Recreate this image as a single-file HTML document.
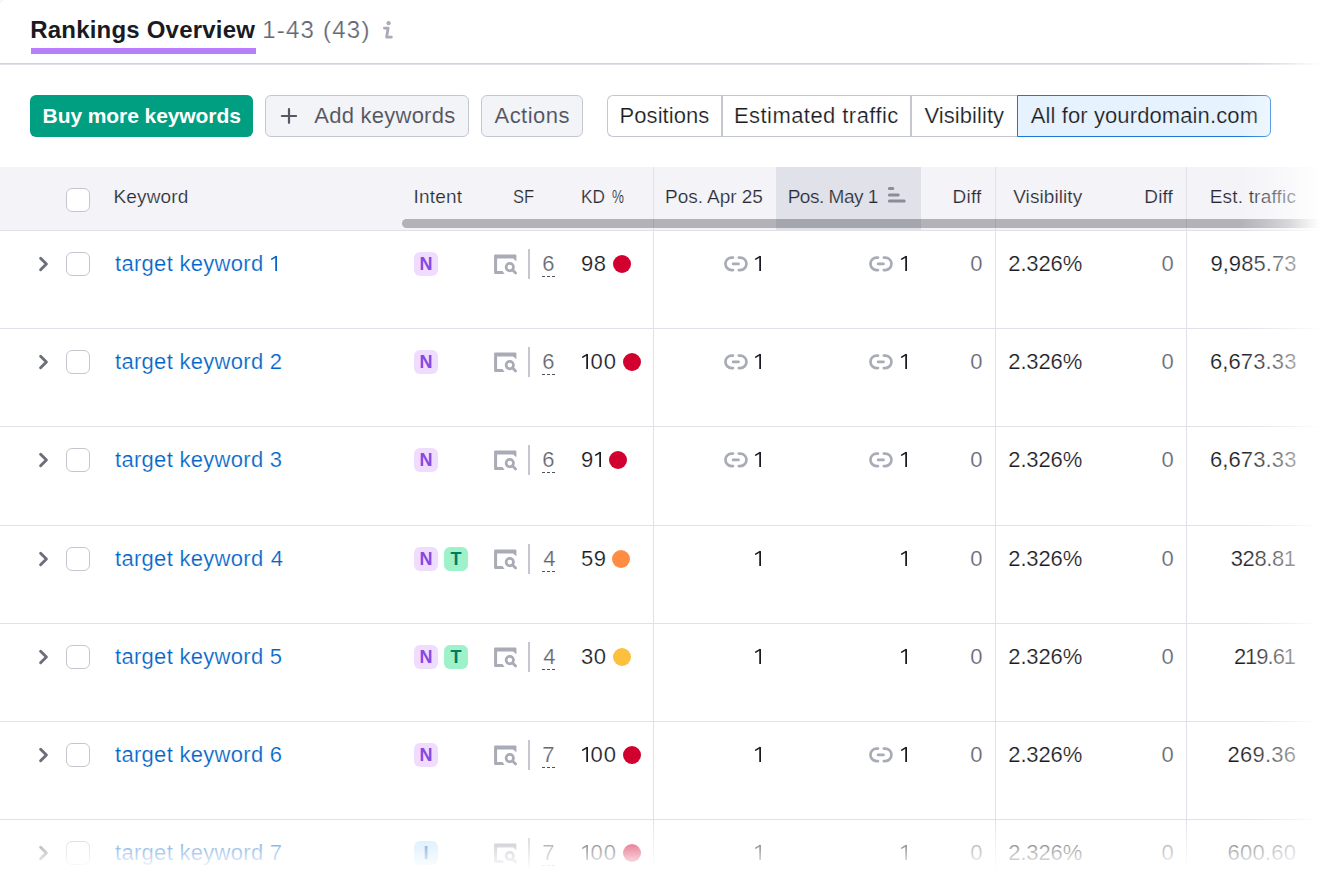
<!DOCTYPE html>
<html><head><meta charset="utf-8"><title>Rankings Overview</title>
<style>
html,body{margin:0;padding:0;background:#fff;width:1323px;height:879px;overflow:hidden;}
body{position:relative;font-family:"Liberation Sans", sans-serif;}
.a{position:absolute;}
.t{position:absolute;white-space:nowrap;}
svg.a{overflow:visible;}
</style></head><body>
<div class="a" style="left:-12px;top:-10px;width:15px;height:15px;box-sizing:border-box;border:1.5px solid #e6e7ec;border-radius:50%"></div>
<svg class="a" style="left:380px;top:18px" width="16" height="24" viewBox="0 0 16 24"><circle cx="8.6" cy="5.2" r="2.1" fill="#a9abb6"/><path d="M4.4 10.1 H8.1 L6.6 19.2 H11.4" fill="none" stroke="#a9abb6" stroke-width="2.8" stroke-linecap="round" stroke-linejoin="round"/></svg>
<div class="a" style="left:31px;top:48px;width:225px;height:6px;background:#b77ffb"></div>
<div class="a" style="left:0;top:63px;width:1323px;height:1px;background:#d0d3dc"></div>
<div class="a" style="left:0;top:64px;width:1323px;height:1px;background:#e0e1e8"></div>
<div class="a" style="left:30px;top:95px;width:223px;height:42px;border-radius:6px;background:#009f81"></div>
<div class="a" style="left:265px;top:95px;width:204px;height:42px;box-sizing:border-box;border:1.5px solid #c4c7cf;border-radius:6px;background:#f3f4f8"></div>
<svg class="a" style="left:279px;top:106px" width="20" height="20" viewBox="0 0 20 20"><path d="M10 3.2 V16.8 M2.9 10 H17.1" stroke="#555863" stroke-width="2.2" stroke-linecap="round"/></svg>
<div class="a" style="left:481px;top:95px;width:102px;height:42px;box-sizing:border-box;border:1.5px solid #c4c7cf;border-radius:6px;background:#f3f4f8"></div>
<div class="a" style="left:607px;top:95px;width:420px;height:42px;box-sizing:border-box;border:1.5px solid #c4c7cf;border-right:none;border-radius:6px 0 0 6px;background:#fff"></div>
<div class="a" style="left:721px;top:95px;width:1.5px;height:42px;background:#c4c7cf"></div>
<div class="a" style="left:910px;top:95px;width:1.5px;height:42px;background:#c4c7cf"></div>
<div class="a" style="left:1017px;top:95px;width:254px;height:42px;box-sizing:border-box;border:1.5px solid #1d78d6;border-radius:0 6px 6px 0;background:#e6f3fe"></div>
<div class="a" style="left:0;top:167px;width:1323px;height:63px;background:#f4f4f8"></div>
<div class="a" style="left:776px;top:167px;width:145px;height:63px;background:#e0e1e9"></div>
<div class="a" style="left:0;top:230px;width:1323px;height:1px;background:#e0e1e9"></div>
<div class="a" style="left:66px;top:188px;width:24px;height:24px;box-sizing:border-box;border:1.5px solid #c4c7cf;border-radius:6px;background:#fff"></div>
<svg class="a" style="left:886px;top:185px" width="22" height="20" viewBox="0 0 22 20"><path d="M3.4 3.6 H6.8 M3.4 10 H12.2 M3.4 16 H18.2" stroke="#8a8c97" stroke-width="3" stroke-linecap="round"/></svg>
<div class="a" style="left:653px;top:167px;width:1px;height:712px;background:#e0e1e9"></div>
<div class="a" style="left:995px;top:167px;width:1px;height:712px;background:#e0e1e9"></div>
<div class="a" style="left:1186px;top:167px;width:1px;height:712px;background:#e0e1e9"></div>
<div class="a" style="left:402px;top:219px;width:940px;height:9px;border-radius:4.5px;background:rgba(25,27,35,0.30)"></div>
<div class="a" style="left:0;top:328px;width:1323px;height:1px;background:#e0e1e9"></div>
<div class="a" style="left:0;top:426px;width:1323px;height:1px;background:#e0e1e9"></div>
<div class="a" style="left:0;top:525px;width:1323px;height:1px;background:#e0e1e9"></div>
<div class="a" style="left:0;top:623px;width:1323px;height:1px;background:#e0e1e9"></div>
<div class="a" style="left:0;top:721px;width:1323px;height:1px;background:#e0e1e9"></div>
<div class="a" style="left:0;top:819px;width:1323px;height:1px;background:#e0e1e9"></div>
<svg class="a" style="left:36px;top:254px" width="16" height="20" viewBox="0 0 16 20"><path d="M4.6 4.2 L10.4 10 L4.6 15.8" fill="none" stroke="#6c6e79" stroke-width="2.9" stroke-linecap="round" stroke-linejoin="round"/></svg>
<div class="a" style="left:66px;top:252px;width:24px;height:24px;box-sizing:border-box;border:1.5px solid #c4c7cf;border-radius:6px;background:#fff"></div>
<div class="a" style="left:414px;top:252px;width:24px;height:24px;border-radius:6px;background:#f0dcfe"></div>
<div class="t" style="left:414px;width:24px;text-align:center;top:254.50px;font-size:18px;line-height:18px;font-weight:700;color:#8649e1">N</div>
<svg class="a" style="left:494px;top:254px" width="24" height="22" viewBox="0 0 24 22"><path d="M0.1 1.6 Q0.1 0.4 1.3 0.4 H21.2 Q22.4 0.4 22.4 1.6 V7.3 L19.1 4.6 H3.1 V17 H8.5 L10.6 19.9 H1.3 Q0.1 19.9 0.1 18.7 Z" fill="#a9abb6"/><circle cx="15.8" cy="13.1" r="3.7" fill="none" stroke="#a9abb6" stroke-width="2.7"/><path d="M18.6 15.9 L21.6 18.9" stroke="#a9abb6" stroke-width="2.8" stroke-linecap="round"/></svg>
<div class="a" style="left:528px;top:249px;width:2px;height:30px;background:#c4c7cf"></div>
<div class="a" style="left:541.8px;top:276px;width:13.3px;height:1px;background:repeating-linear-gradient(to right,#50535e 0 3px,transparent 3px 5px)"></div>
<div class="a" style="left:613.0px;top:255px;width:18px;height:18px;border-radius:50%;background:#d1002f"></div>
<svg class="a" style="left:269.30px;top:254.85px" width="9" height="17" viewBox="0 0 9 17"><rect x="6.25" y="1.15" width="1.75" height="14.85" fill="#0064c8"/><path d="M2.7 4.1 L6.9 1.6" stroke="#0064c8" stroke-width="1.6" stroke-linecap="round"/></svg>
<svg class="a" style="left:753.07px;top:254.85px" width="9" height="17" viewBox="0 0 9 17"><rect x="6.25" y="1.15" width="1.75" height="14.85" fill="#191b23"/><path d="M2.7 4.1 L6.9 1.6" stroke="#191b23" stroke-width="1.6" stroke-linecap="round"/></svg>
<svg class="a" style="left:898.60px;top:254.85px" width="9" height="17" viewBox="0 0 9 17"><rect x="6.25" y="1.15" width="1.75" height="14.85" fill="#191b23"/><path d="M2.7 4.1 L6.9 1.6" stroke="#191b23" stroke-width="1.6" stroke-linecap="round"/></svg>
<svg class="a" style="left:723px;top:256px" width="26" height="17" viewBox="0 0 26 17"><path d="M9.95 1.55 H8.7 A6.25 6.25 0 0 0 8.7 14.05 H9.95 M15.85 1.55 H17.2 A6.25 6.25 0 0 1 17.2 14.05 H15.85 M10.1 7.9 H15.5" fill="none" stroke="#a9abb6" stroke-width="2.7" stroke-linecap="round"/></svg>
<svg class="a" style="left:868px;top:256px" width="26" height="17" viewBox="0 0 26 17"><path d="M9.95 1.55 H8.7 A6.25 6.25 0 0 0 8.7 14.05 H9.95 M15.85 1.55 H17.2 A6.25 6.25 0 0 1 17.2 14.05 H15.85 M10.1 7.9 H15.5" fill="none" stroke="#a9abb6" stroke-width="2.7" stroke-linecap="round"/></svg>
<svg class="a" style="left:36px;top:352px" width="16" height="20" viewBox="0 0 16 20"><path d="M4.6 4.2 L10.4 10 L4.6 15.8" fill="none" stroke="#6c6e79" stroke-width="2.9" stroke-linecap="round" stroke-linejoin="round"/></svg>
<div class="a" style="left:66px;top:350px;width:24px;height:24px;box-sizing:border-box;border:1.5px solid #c4c7cf;border-radius:6px;background:#fff"></div>
<div class="a" style="left:414px;top:350px;width:24px;height:24px;border-radius:6px;background:#f0dcfe"></div>
<div class="t" style="left:414px;width:24px;text-align:center;top:352.50px;font-size:18px;line-height:18px;font-weight:700;color:#8649e1">N</div>
<svg class="a" style="left:494px;top:352px" width="24" height="22" viewBox="0 0 24 22"><path d="M0.1 1.6 Q0.1 0.4 1.3 0.4 H21.2 Q22.4 0.4 22.4 1.6 V7.3 L19.1 4.6 H3.1 V17 H8.5 L10.6 19.9 H1.3 Q0.1 19.9 0.1 18.7 Z" fill="#a9abb6"/><circle cx="15.8" cy="13.1" r="3.7" fill="none" stroke="#a9abb6" stroke-width="2.7"/><path d="M18.6 15.9 L21.6 18.9" stroke="#a9abb6" stroke-width="2.8" stroke-linecap="round"/></svg>
<div class="a" style="left:528px;top:347px;width:2px;height:30px;background:#c4c7cf"></div>
<div class="a" style="left:541.8px;top:374px;width:13.3px;height:1px;background:repeating-linear-gradient(to right,#50535e 0 3px,transparent 3px 5px)"></div>
<div class="a" style="left:622.9px;top:353px;width:18px;height:18px;border-radius:50%;background:#d1002f"></div>
<svg class="a" style="left:579.80px;top:352.85px" width="9" height="17" viewBox="0 0 9 17"><rect x="6.25" y="1.15" width="1.75" height="14.85" fill="#191b23"/><path d="M2.7 4.1 L6.9 1.6" stroke="#191b23" stroke-width="1.6" stroke-linecap="round"/></svg>
<svg class="a" style="left:753.07px;top:352.85px" width="9" height="17" viewBox="0 0 9 17"><rect x="6.25" y="1.15" width="1.75" height="14.85" fill="#191b23"/><path d="M2.7 4.1 L6.9 1.6" stroke="#191b23" stroke-width="1.6" stroke-linecap="round"/></svg>
<svg class="a" style="left:898.60px;top:352.85px" width="9" height="17" viewBox="0 0 9 17"><rect x="6.25" y="1.15" width="1.75" height="14.85" fill="#191b23"/><path d="M2.7 4.1 L6.9 1.6" stroke="#191b23" stroke-width="1.6" stroke-linecap="round"/></svg>
<svg class="a" style="left:723px;top:354px" width="26" height="17" viewBox="0 0 26 17"><path d="M9.95 1.55 H8.7 A6.25 6.25 0 0 0 8.7 14.05 H9.95 M15.85 1.55 H17.2 A6.25 6.25 0 0 1 17.2 14.05 H15.85 M10.1 7.9 H15.5" fill="none" stroke="#a9abb6" stroke-width="2.7" stroke-linecap="round"/></svg>
<svg class="a" style="left:868px;top:354px" width="26" height="17" viewBox="0 0 26 17"><path d="M9.95 1.55 H8.7 A6.25 6.25 0 0 0 8.7 14.05 H9.95 M15.85 1.55 H17.2 A6.25 6.25 0 0 1 17.2 14.05 H15.85 M10.1 7.9 H15.5" fill="none" stroke="#a9abb6" stroke-width="2.7" stroke-linecap="round"/></svg>
<svg class="a" style="left:36px;top:450px" width="16" height="20" viewBox="0 0 16 20"><path d="M4.6 4.2 L10.4 10 L4.6 15.8" fill="none" stroke="#6c6e79" stroke-width="2.9" stroke-linecap="round" stroke-linejoin="round"/></svg>
<div class="a" style="left:66px;top:448px;width:24px;height:24px;box-sizing:border-box;border:1.5px solid #c4c7cf;border-radius:6px;background:#fff"></div>
<div class="a" style="left:414px;top:448px;width:24px;height:24px;border-radius:6px;background:#f0dcfe"></div>
<div class="t" style="left:414px;width:24px;text-align:center;top:450.50px;font-size:18px;line-height:18px;font-weight:700;color:#8649e1">N</div>
<svg class="a" style="left:494px;top:450px" width="24" height="22" viewBox="0 0 24 22"><path d="M0.1 1.6 Q0.1 0.4 1.3 0.4 H21.2 Q22.4 0.4 22.4 1.6 V7.3 L19.1 4.6 H3.1 V17 H8.5 L10.6 19.9 H1.3 Q0.1 19.9 0.1 18.7 Z" fill="#a9abb6"/><circle cx="15.8" cy="13.1" r="3.7" fill="none" stroke="#a9abb6" stroke-width="2.7"/><path d="M18.6 15.9 L21.6 18.9" stroke="#a9abb6" stroke-width="2.8" stroke-linecap="round"/></svg>
<div class="a" style="left:528px;top:445px;width:2px;height:30px;background:#c4c7cf"></div>
<div class="a" style="left:541.8px;top:472px;width:13.3px;height:1px;background:repeating-linear-gradient(to right,#50535e 0 3px,transparent 3px 5px)"></div>
<div class="a" style="left:608.9px;top:451px;width:18px;height:18px;border-radius:50%;background:#d1002f"></div>
<svg class="a" style="left:592.90px;top:450.85px" width="9" height="17" viewBox="0 0 9 17"><rect x="6.25" y="1.15" width="1.75" height="14.85" fill="#191b23"/><path d="M2.7 4.1 L6.9 1.6" stroke="#191b23" stroke-width="1.6" stroke-linecap="round"/></svg>
<svg class="a" style="left:753.07px;top:450.85px" width="9" height="17" viewBox="0 0 9 17"><rect x="6.25" y="1.15" width="1.75" height="14.85" fill="#191b23"/><path d="M2.7 4.1 L6.9 1.6" stroke="#191b23" stroke-width="1.6" stroke-linecap="round"/></svg>
<svg class="a" style="left:898.60px;top:450.85px" width="9" height="17" viewBox="0 0 9 17"><rect x="6.25" y="1.15" width="1.75" height="14.85" fill="#191b23"/><path d="M2.7 4.1 L6.9 1.6" stroke="#191b23" stroke-width="1.6" stroke-linecap="round"/></svg>
<svg class="a" style="left:723px;top:452px" width="26" height="17" viewBox="0 0 26 17"><path d="M9.95 1.55 H8.7 A6.25 6.25 0 0 0 8.7 14.05 H9.95 M15.85 1.55 H17.2 A6.25 6.25 0 0 1 17.2 14.05 H15.85 M10.1 7.9 H15.5" fill="none" stroke="#a9abb6" stroke-width="2.7" stroke-linecap="round"/></svg>
<svg class="a" style="left:868px;top:452px" width="26" height="17" viewBox="0 0 26 17"><path d="M9.95 1.55 H8.7 A6.25 6.25 0 0 0 8.7 14.05 H9.95 M15.85 1.55 H17.2 A6.25 6.25 0 0 1 17.2 14.05 H15.85 M10.1 7.9 H15.5" fill="none" stroke="#a9abb6" stroke-width="2.7" stroke-linecap="round"/></svg>
<svg class="a" style="left:36px;top:549px" width="16" height="20" viewBox="0 0 16 20"><path d="M4.6 4.2 L10.4 10 L4.6 15.8" fill="none" stroke="#6c6e79" stroke-width="2.9" stroke-linecap="round" stroke-linejoin="round"/></svg>
<div class="a" style="left:66px;top:547px;width:24px;height:24px;box-sizing:border-box;border:1.5px solid #c4c7cf;border-radius:6px;background:#fff"></div>
<div class="a" style="left:414px;top:547px;width:24px;height:24px;border-radius:6px;background:#f0dcfe"></div>
<div class="t" style="left:414px;width:24px;text-align:center;top:549.50px;font-size:18px;line-height:18px;font-weight:700;color:#8649e1">N</div>
<div class="a" style="left:444px;top:547px;width:24px;height:24px;border-radius:6px;background:#9ef2c9"></div>
<div class="t" style="left:444px;width:24px;text-align:center;top:549.50px;font-size:18px;line-height:18px;font-weight:700;color:#007c65">T</div>
<svg class="a" style="left:494px;top:549px" width="24" height="22" viewBox="0 0 24 22"><path d="M0.1 1.6 Q0.1 0.4 1.3 0.4 H21.2 Q22.4 0.4 22.4 1.6 V7.3 L19.1 4.6 H3.1 V17 H8.5 L10.6 19.9 H1.3 Q0.1 19.9 0.1 18.7 Z" fill="#a9abb6"/><circle cx="15.8" cy="13.1" r="3.7" fill="none" stroke="#a9abb6" stroke-width="2.7"/><path d="M18.6 15.9 L21.6 18.9" stroke="#a9abb6" stroke-width="2.8" stroke-linecap="round"/></svg>
<div class="a" style="left:528px;top:544px;width:2px;height:30px;background:#c4c7cf"></div>
<div class="a" style="left:541.8px;top:571px;width:13.3px;height:1px;background:repeating-linear-gradient(to right,#50535e 0 3px,transparent 3px 5px)"></div>
<div class="a" style="left:612.0px;top:550px;width:18px;height:18px;border-radius:50%;background:#ff8c43"></div>
<svg class="a" style="left:753.07px;top:549.85px" width="9" height="17" viewBox="0 0 9 17"><rect x="6.25" y="1.15" width="1.75" height="14.85" fill="#191b23"/><path d="M2.7 4.1 L6.9 1.6" stroke="#191b23" stroke-width="1.6" stroke-linecap="round"/></svg>
<svg class="a" style="left:898.60px;top:549.85px" width="9" height="17" viewBox="0 0 9 17"><rect x="6.25" y="1.15" width="1.75" height="14.85" fill="#191b23"/><path d="M2.7 4.1 L6.9 1.6" stroke="#191b23" stroke-width="1.6" stroke-linecap="round"/></svg>
<svg class="a" style="left:36px;top:647px" width="16" height="20" viewBox="0 0 16 20"><path d="M4.6 4.2 L10.4 10 L4.6 15.8" fill="none" stroke="#6c6e79" stroke-width="2.9" stroke-linecap="round" stroke-linejoin="round"/></svg>
<div class="a" style="left:66px;top:645px;width:24px;height:24px;box-sizing:border-box;border:1.5px solid #c4c7cf;border-radius:6px;background:#fff"></div>
<div class="a" style="left:414px;top:645px;width:24px;height:24px;border-radius:6px;background:#f0dcfe"></div>
<div class="t" style="left:414px;width:24px;text-align:center;top:647.50px;font-size:18px;line-height:18px;font-weight:700;color:#8649e1">N</div>
<div class="a" style="left:444px;top:645px;width:24px;height:24px;border-radius:6px;background:#9ef2c9"></div>
<div class="t" style="left:444px;width:24px;text-align:center;top:647.50px;font-size:18px;line-height:18px;font-weight:700;color:#007c65">T</div>
<svg class="a" style="left:494px;top:647px" width="24" height="22" viewBox="0 0 24 22"><path d="M0.1 1.6 Q0.1 0.4 1.3 0.4 H21.2 Q22.4 0.4 22.4 1.6 V7.3 L19.1 4.6 H3.1 V17 H8.5 L10.6 19.9 H1.3 Q0.1 19.9 0.1 18.7 Z" fill="#a9abb6"/><circle cx="15.8" cy="13.1" r="3.7" fill="none" stroke="#a9abb6" stroke-width="2.7"/><path d="M18.6 15.9 L21.6 18.9" stroke="#a9abb6" stroke-width="2.8" stroke-linecap="round"/></svg>
<div class="a" style="left:528px;top:642px;width:2px;height:30px;background:#c4c7cf"></div>
<div class="a" style="left:541.8px;top:669px;width:13.3px;height:1px;background:repeating-linear-gradient(to right,#50535e 0 3px,transparent 3px 5px)"></div>
<div class="a" style="left:613.1px;top:648px;width:18px;height:18px;border-radius:50%;background:#fdc03c"></div>
<svg class="a" style="left:753.07px;top:647.85px" width="9" height="17" viewBox="0 0 9 17"><rect x="6.25" y="1.15" width="1.75" height="14.85" fill="#191b23"/><path d="M2.7 4.1 L6.9 1.6" stroke="#191b23" stroke-width="1.6" stroke-linecap="round"/></svg>
<svg class="a" style="left:898.60px;top:647.85px" width="9" height="17" viewBox="0 0 9 17"><rect x="6.25" y="1.15" width="1.75" height="14.85" fill="#191b23"/><path d="M2.7 4.1 L6.9 1.6" stroke="#191b23" stroke-width="1.6" stroke-linecap="round"/></svg>
<svg class="a" style="left:36px;top:745px" width="16" height="20" viewBox="0 0 16 20"><path d="M4.6 4.2 L10.4 10 L4.6 15.8" fill="none" stroke="#6c6e79" stroke-width="2.9" stroke-linecap="round" stroke-linejoin="round"/></svg>
<div class="a" style="left:66px;top:743px;width:24px;height:24px;box-sizing:border-box;border:1.5px solid #c4c7cf;border-radius:6px;background:#fff"></div>
<div class="a" style="left:414px;top:743px;width:24px;height:24px;border-radius:6px;background:#f0dcfe"></div>
<div class="t" style="left:414px;width:24px;text-align:center;top:745.50px;font-size:18px;line-height:18px;font-weight:700;color:#8649e1">N</div>
<svg class="a" style="left:494px;top:745px" width="24" height="22" viewBox="0 0 24 22"><path d="M0.1 1.6 Q0.1 0.4 1.3 0.4 H21.2 Q22.4 0.4 22.4 1.6 V7.3 L19.1 4.6 H3.1 V17 H8.5 L10.6 19.9 H1.3 Q0.1 19.9 0.1 18.7 Z" fill="#a9abb6"/><circle cx="15.8" cy="13.1" r="3.7" fill="none" stroke="#a9abb6" stroke-width="2.7"/><path d="M18.6 15.9 L21.6 18.9" stroke="#a9abb6" stroke-width="2.8" stroke-linecap="round"/></svg>
<div class="a" style="left:528px;top:740px;width:2px;height:30px;background:#c4c7cf"></div>
<div class="a" style="left:541.8px;top:767px;width:13.3px;height:1px;background:repeating-linear-gradient(to right,#50535e 0 3px,transparent 3px 5px)"></div>
<div class="a" style="left:622.9px;top:746px;width:18px;height:18px;border-radius:50%;background:#d1002f"></div>
<svg class="a" style="left:579.80px;top:745.85px" width="9" height="17" viewBox="0 0 9 17"><rect x="6.25" y="1.15" width="1.75" height="14.85" fill="#191b23"/><path d="M2.7 4.1 L6.9 1.6" stroke="#191b23" stroke-width="1.6" stroke-linecap="round"/></svg>
<svg class="a" style="left:753.07px;top:745.85px" width="9" height="17" viewBox="0 0 9 17"><rect x="6.25" y="1.15" width="1.75" height="14.85" fill="#191b23"/><path d="M2.7 4.1 L6.9 1.6" stroke="#191b23" stroke-width="1.6" stroke-linecap="round"/></svg>
<svg class="a" style="left:898.60px;top:745.85px" width="9" height="17" viewBox="0 0 9 17"><rect x="6.25" y="1.15" width="1.75" height="14.85" fill="#191b23"/><path d="M2.7 4.1 L6.9 1.6" stroke="#191b23" stroke-width="1.6" stroke-linecap="round"/></svg>
<svg class="a" style="left:868px;top:747px" width="26" height="17" viewBox="0 0 26 17"><path d="M9.95 1.55 H8.7 A6.25 6.25 0 0 0 8.7 14.05 H9.95 M15.85 1.55 H17.2 A6.25 6.25 0 0 1 17.2 14.05 H15.85 M10.1 7.9 H15.5" fill="none" stroke="#a9abb6" stroke-width="2.7" stroke-linecap="round"/></svg>
<svg class="a" style="left:36px;top:843px" width="16" height="20" viewBox="0 0 16 20"><path d="M4.6 4.2 L10.4 10 L4.6 15.8" fill="none" stroke="#6c6e79" stroke-width="2.9" stroke-linecap="round" stroke-linejoin="round"/></svg>
<div class="a" style="left:66px;top:841px;width:24px;height:24px;box-sizing:border-box;border:1.5px solid #c4c7cf;border-radius:6px;background:#fff"></div>
<div class="a" style="left:414px;top:841px;width:24px;height:24px;border-radius:6px;background:#c4e5fe"></div>
<div class="t" style="left:414px;width:24px;text-align:center;top:843.50px;font-size:18px;line-height:18px;font-weight:700;color:#006dca">I</div>
<svg class="a" style="left:494px;top:843px" width="24" height="22" viewBox="0 0 24 22"><path d="M0.1 1.6 Q0.1 0.4 1.3 0.4 H21.2 Q22.4 0.4 22.4 1.6 V7.3 L19.1 4.6 H3.1 V17 H8.5 L10.6 19.9 H1.3 Q0.1 19.9 0.1 18.7 Z" fill="#a9abb6"/><circle cx="15.8" cy="13.1" r="3.7" fill="none" stroke="#a9abb6" stroke-width="2.7"/><path d="M18.6 15.9 L21.6 18.9" stroke="#a9abb6" stroke-width="2.8" stroke-linecap="round"/></svg>
<div class="a" style="left:528px;top:838px;width:2px;height:30px;background:#c4c7cf"></div>
<div class="a" style="left:541.8px;top:865px;width:13.3px;height:1px;background:repeating-linear-gradient(to right,#50535e 0 3px,transparent 3px 5px)"></div>
<div class="a" style="left:622.9px;top:844px;width:18px;height:18px;border-radius:50%;background:#d1002f"></div>
<svg class="a" style="left:579.80px;top:843.85px" width="9" height="17" viewBox="0 0 9 17"><rect x="6.25" y="1.15" width="1.75" height="14.85" fill="#191b23"/><path d="M2.7 4.1 L6.9 1.6" stroke="#191b23" stroke-width="1.6" stroke-linecap="round"/></svg>
<svg class="a" style="left:753.07px;top:843.85px" width="9" height="17" viewBox="0 0 9 17"><rect x="6.25" y="1.15" width="1.75" height="14.85" fill="#191b23"/><path d="M2.7 4.1 L6.9 1.6" stroke="#191b23" stroke-width="1.6" stroke-linecap="round"/></svg>
<svg class="a" style="left:898.60px;top:843.85px" width="9" height="17" viewBox="0 0 9 17"><rect x="6.25" y="1.15" width="1.75" height="14.85" fill="#191b23"/><path d="M2.7 4.1 L6.9 1.6" stroke="#191b23" stroke-width="1.6" stroke-linecap="round"/></svg>
<div class="t" style="left:30.20px;top:18.00px;font-size:24px;line-height:24px;color:#191b23;font-weight:700;letter-spacing:0.206px;">Rankings Overview</div>
<div class="t" style="left:262.20px;top:18.00px;font-size:24px;line-height:24px;color:#646772;font-weight:400;letter-spacing:1.225px;-webkit-text-stroke:0.22px #ffffff;">1-43 (43)</div>
<div class="t" style="left:42.60px;top:104.70px;font-size:21px;line-height:21px;color:#ffffff;font-weight:700;letter-spacing:-0.081px;">Buy more keywords</div>
<div class="t" style="left:314.30px;top:104.70px;font-size:22px;line-height:22px;color:#50535e;font-weight:400;letter-spacing:0.245px;-webkit-text-stroke:0.1px #f3f4f8;">Add keywords</div>
<div class="t" style="left:494.50px;top:104.70px;font-size:22px;line-height:22px;color:#50535e;font-weight:400;letter-spacing:0.467px;-webkit-text-stroke:0.1px #f3f4f8;">Actions</div>
<div class="t" style="left:619.60px;top:104.70px;font-size:22px;line-height:22px;color:#191b23;font-weight:400;letter-spacing:0.050px;-webkit-text-stroke:0.22px #ffffff;">Positions</div>
<div class="t" style="left:734.00px;top:104.70px;font-size:22px;line-height:22px;color:#191b23;font-weight:400;letter-spacing:0.438px;-webkit-text-stroke:0.22px #ffffff;">Estimated traffic</div>
<div class="t" style="left:924.40px;top:104.70px;font-size:22px;line-height:22px;color:#191b23;font-weight:400;letter-spacing:0.067px;-webkit-text-stroke:0.22px #ffffff;">Visibility</div>
<div class="t" style="left:1030.70px;top:104.70px;font-size:22px;line-height:22px;color:#191b23;font-weight:400;letter-spacing:0.110px;-webkit-text-stroke:0.22px #e6f3fe;">All for yourdomain.com</div>
<div class="t" style="left:113.40px;top:187.30px;font-size:19px;line-height:19px;color:#262932;font-weight:400;letter-spacing:0.183px;-webkit-text-stroke:0.22px #f4f4f8;">Keyword</div>
<div class="t" style="left:413.40px;top:187.30px;font-size:19px;line-height:19px;color:#262932;font-weight:400;letter-spacing:0.240px;-webkit-text-stroke:0.22px #f4f4f8;">Intent</div>
<div class="t" style="left:513.43px;top:187.30px;font-size:19px;line-height:19px;color:#262932;font-weight:400;letter-spacing:0.000px;-webkit-text-stroke:0.22px #f4f4f8;transform:scaleX(0.8696);transform-origin:0 0;">SF</div>
<div class="t" style="left:580.70px;top:187.30px;font-size:19px;line-height:19px;color:#262932;font-weight:400;letter-spacing:0.000px;-webkit-text-stroke:0.22px #f4f4f8;transform:scaleX(0.9040);transform-origin:0 0;">KD</div>
<div class="t" style="left:611.90px;top:187.30px;font-size:19px;line-height:19px;color:#262932;font-weight:400;letter-spacing:0.000px;-webkit-text-stroke:0.22px #f4f4f8;transform:scaleX(0.7059);transform-origin:0 0;">%</div>
<div class="t" style="left:665.10px;top:187.30px;font-size:19px;line-height:19px;color:#262932;font-weight:400;letter-spacing:-0.050px;-webkit-text-stroke:0.22px #f4f4f8;">Pos. Apr 25</div>
<div class="t" style="left:787.70px;top:187.30px;font-size:19px;line-height:19px;color:#262932;font-weight:400;letter-spacing:-0.489px;-webkit-text-stroke:0.22px #e0e1e9;">Pos. May 1</div>
<div class="t" style="left:952.60px;top:187.30px;font-size:19px;line-height:19px;color:#262932;font-weight:400;letter-spacing:0.200px;-webkit-text-stroke:0.22px #f4f4f8;">Diff</div>
<div class="t" style="left:1013.20px;top:187.30px;font-size:19px;line-height:19px;color:#262932;font-weight:400;letter-spacing:0.078px;-webkit-text-stroke:0.22px #f4f4f8;">Visibility</div>
<div class="t" style="left:1144.30px;top:187.30px;font-size:19px;line-height:19px;color:#262932;font-weight:400;letter-spacing:0.133px;-webkit-text-stroke:0.22px #f4f4f8;">Diff</div>
<div class="t" style="left:1209.70px;top:187.30px;font-size:19px;line-height:19px;color:#262932;font-weight:400;letter-spacing:0.191px;-webkit-text-stroke:0.22px #f4f4f8;">Est. traffic</div>
<div class="t" style="left:115.00px;top:253.00px;font-size:22px;line-height:22px;color:#0064c8;font-weight:400;letter-spacing:0.300px;-webkit-text-stroke:0.22px #ffffff;">target keyword</div>
<div class="t" style="left:542.30px;top:253.00px;font-size:22px;line-height:22px;color:#646772;font-weight:400;letter-spacing:0.000px;-webkit-text-stroke:0.22px #ffffff;">6</div>
<div class="t" style="left:581.00px;top:253.00px;font-size:22px;line-height:22px;color:#191b23;font-weight:400;letter-spacing:0.400px;-webkit-text-stroke:0.22px #ffffff;">98</div>
<div class="t" style="left:970.30px;top:253.00px;font-size:22px;line-height:22px;color:#646772;font-weight:400;letter-spacing:0.000px;-webkit-text-stroke:0.22px #ffffff;">0</div>
<div class="t" style="left:1008.30px;top:253.00px;font-size:22px;line-height:22px;color:#191b23;font-weight:400;letter-spacing:-0.140px;-webkit-text-stroke:0.22px #ffffff;">2.326%</div>
<div class="t" style="left:1161.60px;top:253.00px;font-size:22px;line-height:22px;color:#646772;font-weight:400;letter-spacing:0.000px;-webkit-text-stroke:0.22px #ffffff;">0</div>
<div class="t" style="left:1210.40px;top:253.00px;font-size:22px;line-height:22px;color:#191b23;font-weight:400;letter-spacing:0.057px;-webkit-text-stroke:0.22px #ffffff;">9,985.73</div>
<div class="t" style="left:115.00px;top:351.00px;font-size:22px;line-height:22px;color:#0064c8;font-weight:400;letter-spacing:0.300px;-webkit-text-stroke:0.22px #ffffff;">target keyword</div>
<div class="t" style="left:269.70px;top:351.00px;font-size:22px;line-height:22px;color:#0064c8;font-weight:400;letter-spacing:0.000px;-webkit-text-stroke:0.22px #ffffff;">2</div>
<div class="t" style="left:542.30px;top:351.00px;font-size:22px;line-height:22px;color:#646772;font-weight:400;letter-spacing:0.000px;-webkit-text-stroke:0.22px #ffffff;">6</div>
<div class="t" style="left:590.50px;top:351.00px;font-size:22px;line-height:22px;color:#191b23;font-weight:400;letter-spacing:1.100px;-webkit-text-stroke:0.22px #ffffff;">00</div>
<div class="t" style="left:970.30px;top:351.00px;font-size:22px;line-height:22px;color:#646772;font-weight:400;letter-spacing:0.000px;-webkit-text-stroke:0.22px #ffffff;">0</div>
<div class="t" style="left:1008.30px;top:351.00px;font-size:22px;line-height:22px;color:#191b23;font-weight:400;letter-spacing:-0.140px;-webkit-text-stroke:0.22px #ffffff;">2.326%</div>
<div class="t" style="left:1161.60px;top:351.00px;font-size:22px;line-height:22px;color:#646772;font-weight:400;letter-spacing:0.000px;-webkit-text-stroke:0.22px #ffffff;">0</div>
<div class="t" style="left:1209.90px;top:351.00px;font-size:22px;line-height:22px;color:#191b23;font-weight:400;letter-spacing:0.129px;-webkit-text-stroke:0.22px #ffffff;">6,673.33</div>
<div class="t" style="left:115.00px;top:449.00px;font-size:22px;line-height:22px;color:#0064c8;font-weight:400;letter-spacing:0.300px;-webkit-text-stroke:0.22px #ffffff;">target keyword</div>
<div class="t" style="left:269.70px;top:449.00px;font-size:22px;line-height:22px;color:#0064c8;font-weight:400;letter-spacing:0.000px;-webkit-text-stroke:0.22px #ffffff;">3</div>
<div class="t" style="left:542.30px;top:449.00px;font-size:22px;line-height:22px;color:#646772;font-weight:400;letter-spacing:0.000px;-webkit-text-stroke:0.22px #ffffff;">6</div>
<div class="t" style="left:580.90px;top:449.00px;font-size:22px;line-height:22px;color:#191b23;font-weight:400;letter-spacing:0.000px;-webkit-text-stroke:0.22px #ffffff;">9</div>
<div class="t" style="left:970.30px;top:449.00px;font-size:22px;line-height:22px;color:#646772;font-weight:400;letter-spacing:0.000px;-webkit-text-stroke:0.22px #ffffff;">0</div>
<div class="t" style="left:1008.30px;top:449.00px;font-size:22px;line-height:22px;color:#191b23;font-weight:400;letter-spacing:-0.140px;-webkit-text-stroke:0.22px #ffffff;">2.326%</div>
<div class="t" style="left:1161.60px;top:449.00px;font-size:22px;line-height:22px;color:#646772;font-weight:400;letter-spacing:0.000px;-webkit-text-stroke:0.22px #ffffff;">0</div>
<div class="t" style="left:1209.90px;top:449.00px;font-size:22px;line-height:22px;color:#191b23;font-weight:400;letter-spacing:0.129px;-webkit-text-stroke:0.22px #ffffff;">6,673.33</div>
<div class="t" style="left:115.00px;top:548.00px;font-size:22px;line-height:22px;color:#0064c8;font-weight:400;letter-spacing:0.300px;-webkit-text-stroke:0.22px #ffffff;">target keyword</div>
<div class="t" style="left:270.70px;top:548.00px;font-size:22px;line-height:22px;color:#0064c8;font-weight:400;letter-spacing:0.000px;-webkit-text-stroke:0.22px #ffffff;">4</div>
<div class="t" style="left:543.30px;top:548.00px;font-size:22px;line-height:22px;color:#646772;font-weight:400;letter-spacing:0.000px;-webkit-text-stroke:0.22px #ffffff;">4</div>
<div class="t" style="left:581.00px;top:548.00px;font-size:22px;line-height:22px;color:#191b23;font-weight:400;letter-spacing:0.400px;-webkit-text-stroke:0.22px #ffffff;">59</div>
<div class="t" style="left:970.30px;top:548.00px;font-size:22px;line-height:22px;color:#646772;font-weight:400;letter-spacing:0.000px;-webkit-text-stroke:0.22px #ffffff;">0</div>
<div class="t" style="left:1008.30px;top:548.00px;font-size:22px;line-height:22px;color:#191b23;font-weight:400;letter-spacing:-0.140px;-webkit-text-stroke:0.22px #ffffff;">2.326%</div>
<div class="t" style="left:1161.60px;top:548.00px;font-size:22px;line-height:22px;color:#646772;font-weight:400;letter-spacing:0.000px;-webkit-text-stroke:0.22px #ffffff;">0</div>
<div class="t" style="left:1230.70px;top:548.00px;font-size:22px;line-height:22px;color:#191b23;font-weight:400;letter-spacing:-0.380px;-webkit-text-stroke:0.22px #ffffff;">328.81</div>
<div class="t" style="left:115.00px;top:646.00px;font-size:22px;line-height:22px;color:#0064c8;font-weight:400;letter-spacing:0.300px;-webkit-text-stroke:0.22px #ffffff;">target keyword</div>
<div class="t" style="left:269.70px;top:646.00px;font-size:22px;line-height:22px;color:#0064c8;font-weight:400;letter-spacing:0.000px;-webkit-text-stroke:0.22px #ffffff;">5</div>
<div class="t" style="left:543.30px;top:646.00px;font-size:22px;line-height:22px;color:#646772;font-weight:400;letter-spacing:0.000px;-webkit-text-stroke:0.22px #ffffff;">4</div>
<div class="t" style="left:581.00px;top:646.00px;font-size:22px;line-height:22px;color:#191b23;font-weight:400;letter-spacing:0.400px;-webkit-text-stroke:0.22px #ffffff;">30</div>
<div class="t" style="left:970.30px;top:646.00px;font-size:22px;line-height:22px;color:#646772;font-weight:400;letter-spacing:0.000px;-webkit-text-stroke:0.22px #ffffff;">0</div>
<div class="t" style="left:1008.30px;top:646.00px;font-size:22px;line-height:22px;color:#191b23;font-weight:400;letter-spacing:-0.140px;-webkit-text-stroke:0.22px #ffffff;">2.326%</div>
<div class="t" style="left:1161.60px;top:646.00px;font-size:22px;line-height:22px;color:#646772;font-weight:400;letter-spacing:0.000px;-webkit-text-stroke:0.22px #ffffff;">0</div>
<div class="t" style="left:1233.90px;top:646.00px;font-size:22px;line-height:22px;color:#191b23;font-weight:400;letter-spacing:-1.020px;-webkit-text-stroke:0.22px #ffffff;">219.61</div>
<div class="t" style="left:115.00px;top:744.00px;font-size:22px;line-height:22px;color:#0064c8;font-weight:400;letter-spacing:0.300px;-webkit-text-stroke:0.22px #ffffff;">target keyword</div>
<div class="t" style="left:269.70px;top:744.00px;font-size:22px;line-height:22px;color:#0064c8;font-weight:400;letter-spacing:0.000px;-webkit-text-stroke:0.22px #ffffff;">6</div>
<div class="t" style="left:542.30px;top:744.00px;font-size:22px;line-height:22px;color:#646772;font-weight:400;letter-spacing:0.000px;-webkit-text-stroke:0.22px #ffffff;">7</div>
<div class="t" style="left:590.50px;top:744.00px;font-size:22px;line-height:22px;color:#191b23;font-weight:400;letter-spacing:1.100px;-webkit-text-stroke:0.22px #ffffff;">00</div>
<div class="t" style="left:970.30px;top:744.00px;font-size:22px;line-height:22px;color:#646772;font-weight:400;letter-spacing:0.000px;-webkit-text-stroke:0.22px #ffffff;">0</div>
<div class="t" style="left:1008.30px;top:744.00px;font-size:22px;line-height:22px;color:#191b23;font-weight:400;letter-spacing:-0.140px;-webkit-text-stroke:0.22px #ffffff;">2.326%</div>
<div class="t" style="left:1161.60px;top:744.00px;font-size:22px;line-height:22px;color:#646772;font-weight:400;letter-spacing:0.000px;-webkit-text-stroke:0.22px #ffffff;">0</div>
<div class="t" style="left:1227.60px;top:744.00px;font-size:22px;line-height:22px;color:#191b23;font-weight:400;letter-spacing:0.240px;-webkit-text-stroke:0.22px #ffffff;">269.36</div>
<div class="t" style="left:115.00px;top:842.00px;font-size:22px;line-height:22px;color:#0064c8;font-weight:400;letter-spacing:0.300px;-webkit-text-stroke:0.22px #ffffff;">target keyword</div>
<div class="t" style="left:269.70px;top:842.00px;font-size:22px;line-height:22px;color:#0064c8;font-weight:400;letter-spacing:0.000px;-webkit-text-stroke:0.22px #ffffff;">7</div>
<div class="t" style="left:542.30px;top:842.00px;font-size:22px;line-height:22px;color:#646772;font-weight:400;letter-spacing:0.000px;-webkit-text-stroke:0.22px #ffffff;">7</div>
<div class="t" style="left:590.50px;top:842.00px;font-size:22px;line-height:22px;color:#191b23;font-weight:400;letter-spacing:1.100px;-webkit-text-stroke:0.22px #ffffff;">00</div>
<div class="t" style="left:970.30px;top:842.00px;font-size:22px;line-height:22px;color:#646772;font-weight:400;letter-spacing:0.000px;-webkit-text-stroke:0.22px #ffffff;">0</div>
<div class="t" style="left:1008.30px;top:842.00px;font-size:22px;line-height:22px;color:#191b23;font-weight:400;letter-spacing:-0.140px;-webkit-text-stroke:0.22px #ffffff;">2.326%</div>
<div class="t" style="left:1161.60px;top:842.00px;font-size:22px;line-height:22px;color:#646772;font-weight:400;letter-spacing:0.000px;-webkit-text-stroke:0.22px #ffffff;">0</div>
<div class="t" style="left:1227.40px;top:842.00px;font-size:22px;line-height:22px;color:#191b23;font-weight:400;letter-spacing:0.280px;-webkit-text-stroke:0.22px #ffffff;">600.60</div>
<div class="a" style="left:1240px;top:0;width:83px;height:879px;background:linear-gradient(to right, rgba(255,255,255,0) 0px, rgba(255,255,255,0.22) 25px, rgba(255,255,255,0.5) 50px, rgba(255,255,255,0.85) 70px, #fff 80px)"></div>
<div class="a" style="left:0;top:824px;width:1323px;height:55px;background:linear-gradient(to bottom, rgba(255,255,255,0.15) 0%, rgba(255,255,255,0.75) 60%, #fff 85%)"></div>
</body></html>
